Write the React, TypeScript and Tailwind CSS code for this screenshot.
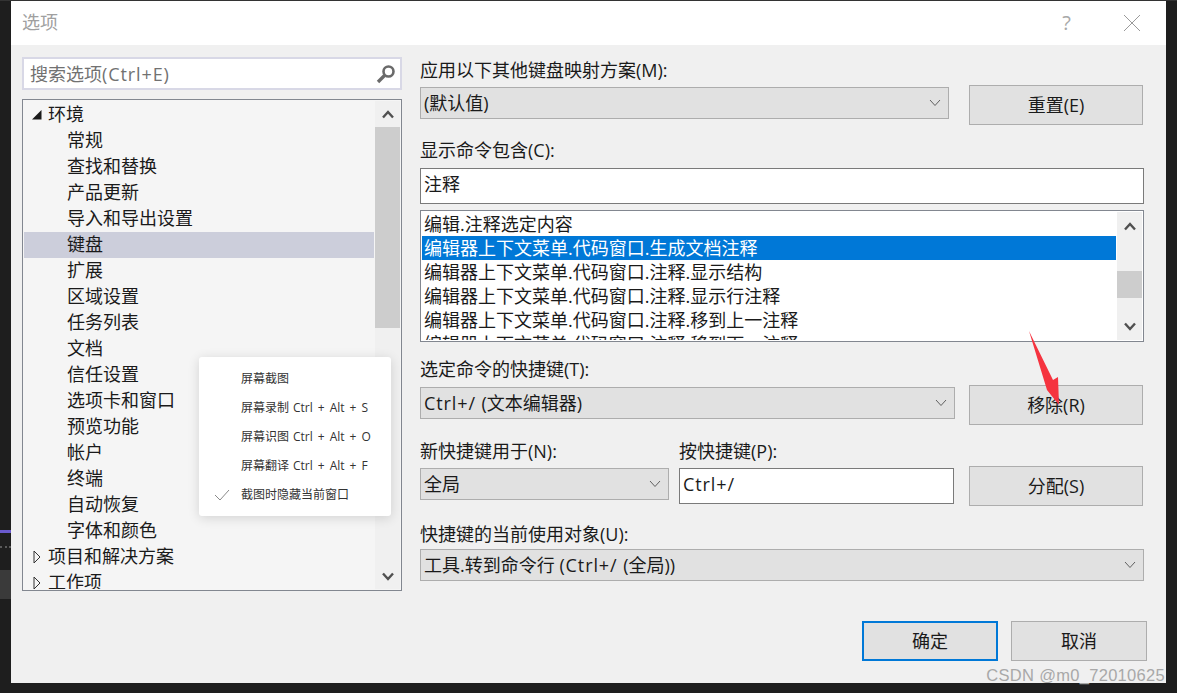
import type { ReactNode } from "react";

const FONT = "font-['Open_Sans','Noto_Sans_CJK_SC',sans-serif]";

function L({ children }: { children: ReactNode }) {
  return <span className="tracking-[0.9px]">{children}</span>;
}

function Chevron({ className = "" }: { className?: string }) {
  return (
    <svg width="12" height="8" viewBox="0 0 12 8" className={className}>
      <path d="M1 1 L6 6.5 L11 1" fill="none" stroke="#606060" strokeWidth="1" />
    </svg>
  );
}

function ScrollArrow({ up }: { up?: boolean }) {
  return (
    <svg width="12" height="9" viewBox="0 0 12 9">
      <path d={up ? "M1 7.5 L6 2 L11 7.5" : "M1 1.5 L6 7 L11 1.5"} fill="none" stroke="#505050" strokeWidth="2.4" />
    </svg>
  );
}

function Combo({ text, className = "" }: { text: ReactNode; className?: string }) {
  return (
    <div className={`h-8 bg-[#e1e1e1] border border-[#adadad] flex items-center justify-between pl-[3px] pr-[7px] text-[18px] text-[#1a1a1a] whitespace-nowrap ${className}`}>
      <span className="leading-[26px]">{text}</span>
      <Chevron />
    </div>
  );
}

function Btn({ text, className = "" }: { text: string; className?: string }) {
  return (
    <div className={`h-10 w-[174px] shrink-0 bg-[#e1e1e1] border border-[#adadad] flex items-center justify-center text-[18px] text-[#1a1a1a] ${className}`}>
      <span className="leading-[26px] mb-[1px]">{text}</span>
    </div>
  );
}

function Label({ text, className = "" }: { text: string; className?: string }) {
  return <div className={`text-[18px] leading-[26px] text-[#1a1a1a] whitespace-nowrap ${className}`}>{text}</div>;
}

const treeChildren1 = ["常规", "查找和替换", "产品更新", "导入和导出设置", "键盘", "扩展", "区域设置", "任务列表", "文档", "信任设置", "选项卡和窗口", "预览功能", "帐户", "终端", "自动恢复", "字体和颜色"];

const listRows = [
  "编辑.注释选定内容",
  "编辑器上下文菜单.代码窗口.生成文档注释",
  "编辑器上下文菜单.代码窗口.注释.显示结构",
  "编辑器上下文菜单.代码窗口.注释.显示行注释",
  "编辑器上下文菜单.代码窗口.注释.移到上一注释",
  "编辑器上下文菜单.代码窗口.注释.移到下一注释",
];

const menuRows: [string, string][] = [
  ["屏幕截图", ""],
  ["屏幕录制", "Ctrl + Alt + S"],
  ["屏幕识图", "Ctrl + Alt + O"],
  ["屏幕翻译", "Ctrl + Alt + F"],
  ["截图时隐藏当前窗口", ""],
];

export default function App() {
  return (
    <div className={`relative w-[1177px] h-[693px] overflow-hidden bg-[#1e1e1e] flex flex-col ${FONT}`}>
      <div className="h-px bg-[#333333] shrink-0" />
      <div className="flex flex-1 min-h-0">
        <div className="w-[11px] shrink-0 flex flex-col">
          <div className="h-[529px]" />
          <div className="h-[3px] bg-[#6a5acd]" />
          <div className="h-[13px]" />
          <div className="h-[2px] border-t-2 border-dotted border-[#5a5a5a]" />
          <div className="h-[22px]" />
          <div className="h-[29px] bg-[#3a3a3a]" />
        </div>
        <div className="w-[1155px] shrink-0 bg-[#f0f0f0] flex flex-col">
          <div className="h-[44px] shrink-0 bg-white flex items-center justify-between pl-[11px] pr-[25px]">
            <span className="text-[18px] leading-[26px] mb-[2px] text-[#a0a0a0]">选项</span>
            <div className="flex items-center gap-[52px]">
              <span className="text-[20px] leading-[26px] text-[#a8a8a8]">?</span>
              <svg width="18" height="18" viewBox="0 0 18 18">
                <path d="M1 1 L17 17 M17 1 L1 17" stroke="#9a9a9a" strokeWidth="1" fill="none" />
              </svg>
            </div>
          </div>
          <div className="flex flex-1 min-h-0 pl-[11px] pt-[12px]">
            <div className="w-[380px] shrink-0">
              <div className="h-[33px] bg-white border-2 border-[#d8d8e6] flex items-center justify-between pl-[6px] pr-[3px] text-[18px] text-[#717171]">
                <span className="leading-[26px]">搜索选项<L>(Ctrl+E)</L></span>
                <svg width="22" height="22" viewBox="0 0 22 22">
                  <circle cx="13.5" cy="8.5" r="5" fill="none" stroke="#6a6a6a" strokeWidth="2.6" />
                  <path d="M9.5 12.5 L3 19" stroke="#6a6a6a" strokeWidth="3.4" />
                </svg>
              </div>
              <div className="mt-[9px] h-[492px] border border-[#828790] bg-[#f5f5f5] p-px flex overflow-hidden">
                <div className="flex-1 min-w-0 overflow-hidden text-[18px] leading-[24px] text-[#1a1a1a]">
                  <div className="h-[26px] mt-[1px] flex items-start pl-[8px] gap-[6px]">
                    <svg width="10" height="10" viewBox="0 0 10 10" className="shrink-0 mt-[8px]"><path d="M0 9.5 L9.5 9.5 L9.5 0 Z" fill="#1a1a1a" /></svg>
                    <span>环境</span>
                  </div>
                  {treeChildren1.map((t) => (
                    <div key={t} className={`h-[26px] pl-[43px] ${t === "键盘" ? "bg-[#cccedb]" : ""}`}>{t}</div>
                  ))}
                  <div className="h-[26px] flex items-start pl-[9px] gap-[7px]">
                    <svg width="8" height="14" viewBox="0 0 8 14" className="shrink-0 mt-[6px]"><path d="M1 1 L7 7 L1 13 Z" fill="none" stroke="#333333" /></svg>
                    <span>项目和解决方案</span>
                  </div>
                  <div className="h-[26px] flex items-start pl-[9px] gap-[7px]">
                    <svg width="8" height="14" viewBox="0 0 8 14" className="shrink-0 mt-[6px]"><path d="M1 1 L7 7 L1 13 Z" fill="none" stroke="#333333" /></svg>
                    <span>工作项</span>
                  </div>
                </div>
                <div className="w-[25px] shrink-0 ml-px bg-[#f0f0f0] flex flex-col items-center">
                  <div className="h-[26px] shrink-0 flex items-center justify-center"><ScrollArrow up /></div>
                  <div className="w-full h-[201px] bg-[#cdcdcd]" />
                  <div className="flex-1" />
                  <div className="h-[26px] shrink-0 flex items-center justify-center"><ScrollArrow /></div>
                </div>
              </div>
            </div>

            <div className="ml-[18px] w-[727px] shrink-0 flex flex-col">
              <Label text="应用以下其他键盘映射方案(M):" className="h-[28px]" />
              <div className="flex items-start gap-[20px]">
                <Combo text="(默认值)" className="w-[529px] mt-[2px]" />
                <Btn text="重置(E)" />
              </div>
              <Label text="显示命令包含(C):" className="mt-[12px] h-[31px]" />
              <div className="w-[724px] h-[36px] bg-white border border-[#7a7a7a] pl-[3px] text-[18px] leading-[30px] text-[#1a1a1a]">注释</div>
              <div className="mt-[6px] w-[724px] h-[132px] bg-white border border-[#828790] p-px flex overflow-hidden">
                <div className="flex-1 min-w-0 overflow-hidden text-[18px] leading-[24px] text-[#1a1a1a]">
                  {listRows.map((r, i) => (
                    <div key={r} className={`h-[24px] shrink-0 pl-[2px] whitespace-nowrap ${i === 1 ? "bg-[#0078d7] text-white" : ""}`}>{r}</div>
                  ))}
                </div>
                <div className="w-[25px] shrink-0 ml-px bg-[#f0f0f0] flex flex-col items-center">
                  <div className="h-[28px] flex items-center justify-center"><ScrollArrow up /></div>
                  <div className="h-[31px]" />
                  <div className="w-full h-[27px] bg-[#cdcdcd]" />
                  <div className="flex-1" />
                  <div className="h-[28px] flex items-center justify-center"><ScrollArrow /></div>
                </div>
              </div>
              <Label text="选定命令的快捷键(T):" className="mt-[14px] h-[29px]" />
              <div className="flex items-start gap-[14px]">
                <Combo text={<><L>Ctrl+/ </L>(文本编辑器)</>} className="w-[535px] mt-[2px]" />
                <Btn text="移除(R)" />
              </div>
              <div className="mt-[13px] flex items-start">
                <div className="w-[249px]">
                  <Label text="新快捷键用于(N):" className="h-[30px]" />
                  <Combo text="全局" className="w-[249px]" />
                </div>
                <div className="ml-[10px] w-[275px]">
                  <Label text="按快捷键(P):" className="h-[30px]" />
                  <div className="h-[36px] bg-white border border-[#7a7a7a] pl-[3px] text-[18px] leading-[30px] text-[#1a1a1a]"><L>Ctrl+/</L></div>
                </div>
                <Btn text="分配(S)" className="ml-[15px] mt-[28px]" />
              </div>
              <Label text="快捷键的当前使用对象(U):" className="mt-[15px] h-[28px]" />
              <Combo text={<>工具.转到命令行 <L>(Ctrl+/ </L>(全局))</>} className="w-[724px]" />
              <div className="mt-[40px] flex justify-end gap-[13px]">
                <div className="h-10 w-[136px] bg-[#e1e1e1] border-2 border-[#0078d7] flex items-center justify-center text-[18px] text-[#1a1a1a]"><span className="leading-[26px] mb-[1px]">确定</span></div>
                <div className="h-10 w-[136px] bg-[#e1e1e1] border border-[#adadad] flex items-center justify-center text-[18px] text-[#1a1a1a]"><span className="leading-[26px] mb-[1px]">取消</span></div>
              </div>
            </div>
          </div>
        </div>
        <div className="flex-1" />
      </div>
      <div className="h-[10px] shrink-0" />

      <div className="absolute left-[199px] top-[357px] w-[192px] h-[159px] bg-white rounded-[3px] shadow-[0_2px_12px_rgba(0,0,0,0.14)] pt-[7px] text-[12px] text-[#333333]">
        {menuRows.map(([cn, keys], i) => (
          <div key={cn} className="relative h-[29px] flex items-center pl-[42px] whitespace-nowrap">
            {i === 4 && (
              <svg width="16" height="12" viewBox="0 0 16 12" className="absolute left-[15px] top-[9px]">
                <path d="M1 6 L6 11 L15 1" fill="none" stroke="#8a8a8a" strokeWidth="1" />
              </svg>
            )}
            {cn}
            {keys && <span className="ml-[4px] [word-spacing:1.9px]">{keys}</span>}
          </div>
        ))}
      </div>

      <svg width="40" height="85" viewBox="0 0 40 85" className="absolute left-[1025px] top-[328px]">
        <path d="M4 3 L28 52 L33 49 L34 77 L22 62 Z" fill="#f5333f" />
      </svg>

      <div className="absolute right-[12px] bottom-[8px] text-[16.5px] leading-[20px] text-[#a8a8a8] tracking-[0.3px] font-['Liberation_Sans',sans-serif]">CSDN @m0_72010625</div>
    </div>
  );
}
